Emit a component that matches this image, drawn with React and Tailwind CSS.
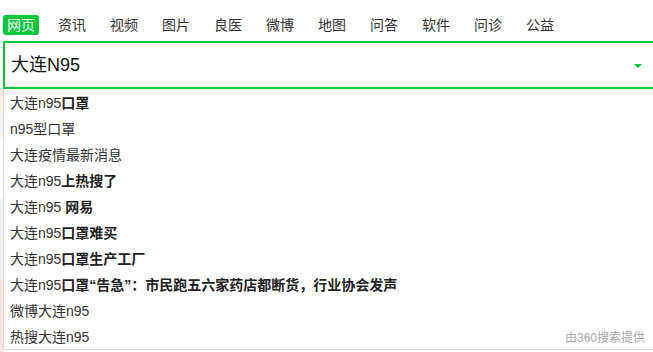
import React from "react";

const navItems = ["资讯", "视频", "图片", "良医", "微博", "地图", "问答", "软件", "问诊", "公益"];

const suggestions = [
  ["大连n95", "口罩"],
  ["n95型口罩", ""],
  ["大连疫情最新消息", ""],
  ["大连n95", "上热搜了"],
  ["大连n95\u00a0", "网易"],
  ["大连n95", "口罩难买"],
  ["大连n95", "口罩生产工厂"],
  ["大连n95", "口罩“告急”：市民跑五六家药店都断货，行业协会发声"],
  ["微博大连n95", ""],
  ["热搜大连n95", ""],
];

export default function App() {
  return (
    <div
      className="w-[653px] h-[352px] overflow-hidden bg-white text-[#333]"
      style={{ fontFamily: '"Liberation Sans", "Noto Sans CJK SC", sans-serif' }}
    >
      {/* top nav */}
      <div className="h-[41px] flex items-end pb-[6px] pl-[3px]">
        <span className="bg-[#00c73c] text-white text-[14px] leading-[20px] px-[4px] rounded-[3px]">网页</span>
        <div className="flex ml-[19px]">
          {navItems.map((t) => (
            <span key={t} className="w-[52px] text-[14px] leading-[20px] text-[#333]">{t}</span>
          ))}
        </div>
      </div>

      {/* search box */}
      <div className="ml-[3px] w-[680px] h-[48px] border-2 border-[#00c73c] flex items-center pl-[6px]">
        <span className="text-[18px] text-[#111]">大连N95</span>
        <span className="ml-[554px] mt-[2px] w-0 h-0 border-l-[4px] border-r-[4px] border-t-[4px] border-l-transparent border-r-transparent border-t-[#00c73c]" />
      </div>

      {/* dropdown over the page */}
      <div className="flex">
        <div className="w-[3px] shrink-0 flex flex-col">
          <div className="h-[22px] bg-[#fdf0dc]" />
          <div className="h-[28px] bg-[#f5f5f5]" />
          <div className="h-[60px] bg-white" />
          <div className="h-[80px] bg-[#f3f3f3]" />
          <div className="h-[80px] bg-[#fbe3e3]" />
        </div>
        <div className="w-[680px] shrink-0 h-[261px] border-l border-b border-[#ddd] bg-white pt-[1px]">
          {suggestions.map(([a, b], i) => (
            <div key={i} className="h-[26.1px] flex items-center pl-[6px] text-[14px] pr-[38px]">
              <span className="text-[#333]">{a}</span>
              {b && <span className="font-bold text-[#222]">{b}</span>}
              {i === suggestions.length - 1 && (
                <span className="ml-auto text-[12px] text-[#aaa]">由360搜索提供</span>
              )}
            </div>
          ))}
        </div>
      </div>
    </div>
  );
}
